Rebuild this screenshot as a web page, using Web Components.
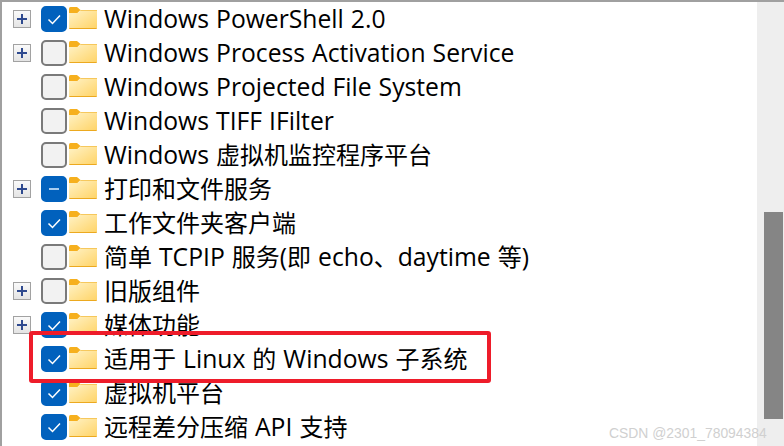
<!DOCTYPE html>
<html lang="zh-CN">
<head>
<meta charset="utf-8">
<title>Windows 功能</title>
<style>
  html, body { margin: 0; padding: 0; background: #fff; }
  body { width: 784px; height: 446px; overflow: hidden; }
</style>
</head>
<body>
<feature-window>
  <feature-row expander state="checked"><lt-run>Windows PowerShell 2.0</lt-run></feature-row>
  <feature-row expander><lt-run>Windows Process Activation Service</lt-run></feature-row>
  <feature-row><lt-run>Windows Projected File System</lt-run></feature-row>
  <feature-row><lt-run>Windows TIFF IFilter</lt-run></feature-row>
  <feature-row><lt-run>Windows </lt-run>虚拟机监控程序平台</feature-row>
  <feature-row expander state="mixed">打印和文件服务</feature-row>
  <feature-row state="checked">工作文件夹客户端</feature-row>
  <feature-row>简单<lt-run> TCPIP </lt-run>服务<lt-run>(</lt-run>即<lt-run> echo</lt-run>、<lt-run>daytime </lt-run>等<lt-run>)</lt-run></feature-row>
  <feature-row expander>旧版组件</feature-row>
  <feature-row expander state="checked">媒体功能</feature-row>
  <feature-row state="checked">适用于<lt-run> Linux </lt-run>的<lt-run> Windows </lt-run>子系统</feature-row>
  <feature-row state="checked">虚拟机平台</feature-row>
  <feature-row state="checked">远程差分压缩<lt-run> API </lt-run>支持</feature-row>
</feature-window>

<template id="win-tpl">
  <style>
    :host {
      display: flex; position: relative; width: 784px; height: 446px; box-sizing: border-box;
      border-top: 2px solid #a0a0a0; border-left: 2px solid #a0a0a0; background: #fff;
      overflow: hidden; color: #000;
      font-family: "Open Sans", "Noto Sans CJK SC", sans-serif; font-size: 24px;
    }
    .list { flex: 1; min-width: 0; display: flex; flex-direction: column; }
    .track { width: 27px; background: #eeeeee; padding: 210px 1px 0 7px; box-sizing: border-box; flex: none; }
    .thumb { height: 207px; background: #858585; }
    .mark {
      position: absolute; left: 27px; top: 329px; width: 462px; height: 52px; box-sizing: border-box;
      border: 4px solid #ee1c2a; border-radius: 3px;
    }
    .wm {
      position: absolute; left: 607px; top: 423px; white-space: nowrap;
      font: 13.9px "Liberation Sans", sans-serif; color: #d0d0d0;
    }
  </style>
  <div class="list"><slot></slot></div>
  <div class="track"><div class="thumb"></div></div>
  <div class="mark"></div>
  <div class="wm">CSDN @2301_78094384</div>
</template>

<template id="row-tpl">
  <style>
    :host { display: flex; align-items: center; height: 34px; flex: none; }
    .exp {
      width: 18px; height: 18px; margin-left: 11px; box-sizing: border-box; flex: none;
      border: 1px solid #a2a2a2; background: linear-gradient(#fafafa, #e4e4e4); display: block;
    }
    .exp svg { display: block; }
    .exp.none { visibility: hidden; }
    .box {
      width: 26px; height: 26px; margin-left: 10px; box-sizing: border-box; border-radius: 5px; flex: none;
      border: 2px solid #7a7a7a; background: #f2f2f2;
    }
    .box svg { display: none; }
    :host([state="checked"]) .box, :host([state="mixed"]) .box { background: #0161bd; border-color: #0161bd; }
    :host([state="checked"]) .check { display: block; }
    :host([state="mixed"]) .dash { display: block; }
    .folder { display: block; margin: 0 0 2px 2px; flex: none; }
    .label { margin-left: 7px; padding-bottom: 1px; line-height: 30px; white-space: pre; word-spacing: .6px; }
  </style>
  <span class="exp"><svg width="16" height="16" viewBox="0 0 16 16"><path d="M3 8h10M8 3v10" stroke="#2f4a8f" stroke-width="2" fill="none"/></svg></span>
  <span class="box">
    <svg class="check" width="22" height="22" viewBox="0 0 22 22"><path d="M5.5 11.5l4 4 7.5-8" stroke="#fff" stroke-width="1.5" fill="none"/></svg>
    <svg class="dash" width="22" height="22" viewBox="0 0 22 22"><path d="M6 11h10" stroke="#a9cdf0" stroke-width="2" fill="none"/></svg>
  </span>
  <svg class="folder" width="28" height="22" viewBox="0 0 28 22">
    <defs><linearGradient id="f" x1="0" y1="0" x2="1" y2="1"><stop offset="0" stop-color="#fff3c8"/><stop offset="1" stop-color="#ffd468"/></linearGradient></defs>
    <path d="M0 1.5Q0 0 1.5 0H8L11.5 3L8.5 6H0Z" fill="#f6b01e"/>
    <path d="M0 6H8.5L11.5 3.2H28V21H0Z" fill="url(#f)"/>
    <path d="M0 21H28V21Q28 22 27 22H1Q0 22 0 21Z" fill="#eca91f"/>
    <path d="M11.5 3H28V3.8H11Z" fill="#f3bb3c"/>
  </svg>
  <span class="label"><slot></slot></span>
</template>

<script>
  const mount = (host, id) => host.attachShadow({ mode: "open" }).appendChild(document.getElementById(id).content.cloneNode(true));
  class FeatureWindow extends HTMLElement {
    constructor() { super(); mount(this, "win-tpl"); }
  }
  class FeatureRow extends HTMLElement {
    constructor() { super(); mount(this, "row-tpl"); }
    connectedCallback() {
      this.shadowRoot.querySelector(".exp").classList.toggle("none", !this.hasAttribute("expander"));
    }
  }
  class LatinRun extends HTMLElement {
    constructor() {
      super();
      this.attachShadow({ mode: "open" }).innerHTML = '<style>:host{display:inline;font-size:24.7px}</style><slot></slot>';
    }
  }
  customElements.define("feature-window", FeatureWindow);
  customElements.define("feature-row", FeatureRow);
  customElements.define("lt-run", LatinRun);
</script>
</body>
</html>
